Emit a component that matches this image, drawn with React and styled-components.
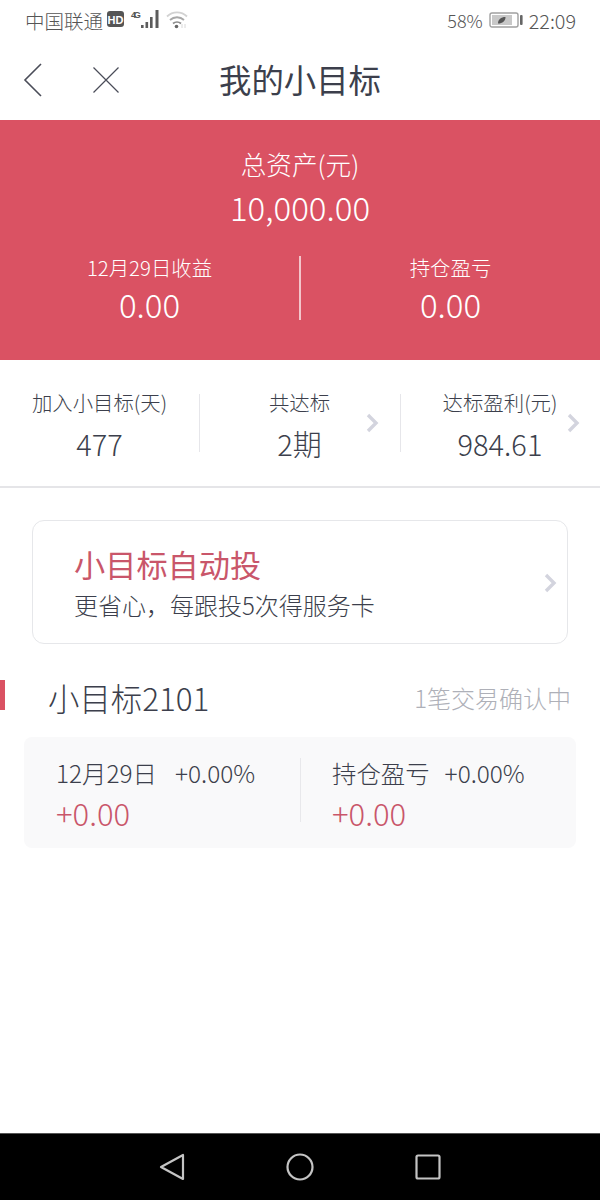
import React from "react";
import styled, { createGlobalStyle } from "styled-components";

const GlobalStyle = createGlobalStyle`
  html, body {
    margin: 0;
    padding: 0;
    background: #fff;
  }
  * {
    box-sizing: border-box;
  }
`;

const FONT = `"Noto Sans CJK SC", "Noto Sans", sans-serif`;

const Page = styled.div`
  width: 600px;
  height: 1200px;
  display: flex;
  flex-direction: column;
  font-family: ${FONT};
  font-weight: 300;
  color: #3c3f4c;
  background: #fff;
  overflow: hidden;
`;

const StatusBar = styled.div`
  height: 40px;
  padding: 0 24px 0 25px;
  display: flex;
  align-items: center;
  justify-content: space-between;
  color: #555;
`;

const StatusGroup = styled.div`
  display: flex;
  align-items: center;
  gap: ${(p) => p.$gap}px;
`;

const StatusText = styled.span`
  font-size: ${(p) => p.$size}px;
`;

const NavBar = styled.div`
  height: 80px;
  padding: 0 22px;
  display: flex;
  align-items: center;
  position: relative;
  gap: 48px;
`;

const NavTitle = styled.div`
  position: absolute;
  left: 0;
  right: 0;
  margin-top: -2px;
  text-align: center;
  font-size: 32.4px;
  line-height: 40px;
  font-weight: 400;
  pointer-events: none;
`;

const Banner = styled.div`
  height: 240px;
  background: #da5263;
  color: #fff;
  display: flex;
  flex-direction: column;
  align-items: center;
  padding-top: 27px;
`;

const BannerLabel = styled.div`
  font-size: 25.6px;
  line-height: 34px;
`;

const BannerTotal = styled.div`
  font-size: 33px;
  line-height: 44px;
  margin-top: 4px;
`;

const BannerRow = styled.div`
  width: 100%;
  margin-top: 27px;
  display: grid;
  grid-template-columns: 299px 1fr;
`;

const BannerCell = styled.div`
  display: flex;
  flex-direction: column;
  align-items: center;
  height: 64px;
  border-left: ${(p) => (p.$divided ? "2px solid #f3c5cb" : "none")};
`;

const BannerSub = styled.div`
  font-size: 20.4px;
  line-height: 26px;
  margin-top: -2px;
`;

const BannerValue = styled.div`
  font-size: 33px;
  line-height: 42px;
  margin-top: 3px;
`;

const Stats = styled.div`
  height: 128px;
  border-bottom: 2px solid #e5e5e8;
  display: grid;
  grid-template-columns: 199px 201px 200px;
  padding-top: 34px;
`;

const StatCell = styled.div`
  height: 58px;
  position: relative;
  border-left: ${(p) => (p.$divided ? "1px solid #e6e6ea" : "none")};
  display: flex;
  flex-direction: column;
  align-items: center;
  padding-right: ${(p) => (p.$divided ? 1 : 0)}px;
`;

const StatLabel = styled.div`
  font-size: 20.4px;
  line-height: 26px;
  margin-top: -5px;
`;

const StatValue = styled.div`
  font-size: 29px;
  line-height: 38px;
  margin-top: 9px;
`;

const Chevron = styled.svg`
  position: absolute;
  right: ${(p) => p.$right}px;
  top: ${(p) => p.$top}px;
`;

const AutoCard = styled.div`
  position: relative;
  margin: 32px 32px 0;
  height: 124px;
  border: 1.5px solid #e6e7ea;
  border-radius: 12px;
  padding: 21px 41px 0;
`;

const AutoTitle = styled.div`
  font-size: 31.2px;
  line-height: 44px;
  color: #c9566a;
  font-weight: 400;
`;

const AutoText = styled.div`
  font-size: 24px;
  line-height: 34px;
  margin-top: 2px;
`;

const SectionHead = styled.div`
  position: relative;
  margin-top: 32px;
  height: 44px;
  padding: 0 29px 0 48px;
  display: flex;
  align-items: center;
  justify-content: space-between;
`;

const SectionMark = styled.span`
  position: absolute;
  left: 0;
  top: 4px;
  width: 5px;
  height: 30px;
  background: #da5263;
`;

const SectionTitle = styled.div`
  font-size: 31.4px;
  line-height: 44px;
`;

const SectionNote = styled.div`
  font-size: 24px;
  line-height: 32px;
  color: #aeb0b8;
`;

const HoldCard = styled.div`
  margin: 17px 24px 0;
  height: 111px;
  background: #f9f9fa;
  border-radius: 8px;
  display: grid;
  grid-template-columns: 276px 1fr;
  padding-top: 21px;
`;

const HoldCell = styled.div`
  height: 64px;
  padding-left: ${(p) => (p.$divided ? 31 : 32)}px;
  border-left: ${(p) => (p.$divided ? "1px solid #e8e8eb" : "none")};
`;

const HoldTop = styled.div`
  display: flex;
  gap: ${(p) => p.$gap}px;
  font-size: 24.4px;
  line-height: 34px;
  margin-top: -2px;
`;

const HoldValue = styled.div`
  font-size: 31px;
  line-height: 42px;
  margin-top: 2px;
  color: #c9566a;
`;

const Spacer = styled.div`
  flex: 1;
`;

const BottomBar = styled.div`
  height: 67px;
  background: #000;
  border-top: 1px solid #555;
  display: grid;
  grid-template-columns: repeat(3, 128px);
  justify-content: center;
  justify-items: center;
  align-items: center;
`;

const ChevronIcon = ({ right, top }) => (
  <Chevron $right={right} $top={top} width="14" height="20" viewBox="0 0 14 20" fill="none">
    <path d="M3 2l8 8-8 8" stroke="#d3d4de" strokeWidth="3.4" />
  </Chevron>
);

const SignalIcons = () => (
  <svg width="84" height="26" viewBox="0 0 84 26" fill="none">
    <rect x="2" y="4" width="17" height="16" rx="3" fill="#555" />
    <text x="10.5" y="16.500" fontSize="11" fontWeight="700" textAnchor="middle" fill="#fff" fontFamily="Liberation Sans, sans-serif">HD</text>
    <text x="26" y="11" fontSize="9.500" fontWeight="700" fill="#555" fontFamily="Liberation Sans, sans-serif" textLength="10">4G</text>
    <g fill="#5c5c5c">
      <rect x="36" y="18" width="2.600" height="3" />
      <rect x="40.500" y="15" width="2.600" height="6" />
      <rect x="45" y="10" width="2.600" height="11" />
      <rect x="50.500" y="3" width="3" height="18" />
    </g>
    <g fill="none" strokeWidth="1.800">
      <path d="M62 9.500c5.600-5.600 14.400-5.600 20 0" stroke="#d2d2d2" />
      <path d="M65 13c4-3.700 10-3.700 14 0" stroke="#a8a8a8" />
      <path d="M68 16.500c2.300-1.900 5.700-1.900 8 0" stroke="#8c8c8c" />
    </g>
    <circle cx="71.500" cy="19.500" r="1.800" fill="#666" />
    <path d="M77 17v4M80 17v4" stroke="#d8d8d8" strokeWidth="1" />
  </svg>
);

const BatteryIcon = () => (
  <svg width="34" height="18" viewBox="0 0 34 18" fill="none">
    <rect x="1" y="2" width="28" height="14" rx="2" stroke="#a0a0a0" strokeWidth="1.400" />
    <rect x="3" y="4" width="20" height="10" fill="#c8c8c8" />
    <rect x="31" y="4" width="2.600" height="10" rx="1" fill="#666" />
    <path d="M9 12.500c0-4 3-6.500 7.500-6.500 0 4-3 6.500-7.500 6.500z" fill="#555" />
  </svg>
);

const BackIcon = () => (
  <svg width="22" height="34" viewBox="0 0 22 34" fill="none">
    <path d="M19 1L3 17l16 16" stroke="#4a4c58" strokeWidth="1.600" />
  </svg>
);

const CloseIcon = () => (
  <svg width="28" height="28" viewBox="0 0 28 28" fill="none">
    <path d="M1.500 1.500l25 25M26.500 1.500l-25 25" stroke="#4a4c58" strokeWidth="1.200" />
  </svg>
);

const App = () => (
  <Page>
    <GlobalStyle />
    <StatusBar>
      <StatusGroup $gap={2}>
        <StatusText $size={19.5}>中国联通</StatusText>
        <SignalIcons />
      </StatusGroup>
      <StatusGroup $gap={6}>
        <StatusText $size={18}>58%</StatusText>
        <BatteryIcon />
        <StatusText $size={19.8}>22:09</StatusText>
      </StatusGroup>
    </StatusBar>
    <NavBar>
      <BackIcon />
      <CloseIcon />
      <NavTitle>我的小目标</NavTitle>
    </NavBar>
    <Banner>
      <BannerLabel>总资产(元)</BannerLabel>
      <BannerTotal>10,000.00</BannerTotal>
      <BannerRow>
        <BannerCell>
          <BannerSub>12月29日收益</BannerSub>
          <BannerValue>0.00</BannerValue>
        </BannerCell>
        <BannerCell $divided>
          <BannerSub>持仓盈亏</BannerSub>
          <BannerValue>0.00</BannerValue>
        </BannerCell>
      </BannerRow>
    </Banner>
    <Stats>
      <StatCell>
        <StatLabel>加入小目标(天)</StatLabel>
        <StatValue>477</StatValue>
      </StatCell>
      <StatCell $divided>
        <StatLabel>共达标</StatLabel>
        <StatValue>2期</StatValue>
        <ChevronIcon right={21} top={19} />
      </StatCell>
      <StatCell $divided>
        <StatLabel>达标盈利(元)</StatLabel>
        <StatValue>984.61</StatValue>
        <ChevronIcon right={20} top={19} />
      </StatCell>
    </Stats>
    <AutoCard>
      <AutoTitle>小目标自动投</AutoTitle>
      <AutoText>更省心，每跟投5次得服务卡</AutoText>
      <ChevronIcon right={10} top={52} />
    </AutoCard>
    <SectionHead>
      <SectionMark />
      <SectionTitle>小目标2101</SectionTitle>
      <SectionNote>1笔交易确认中</SectionNote>
    </SectionHead>
    <HoldCard>
      <HoldCell>
        <HoldTop $gap={18}>
          <span>12月29日</span>
          <span>+0.00%</span>
        </HoldTop>
        <HoldValue>+0.00</HoldValue>
      </HoldCell>
      <HoldCell $divided>
        <HoldTop $gap={15}>
          <span>持仓盈亏</span>
          <span>+0.00%</span>
        </HoldTop>
        <HoldValue>+0.00</HoldValue>
      </HoldCell>
    </HoldCard>
    <Spacer />
    <BottomBar>
      <svg width="26" height="28" viewBox="0 0 26 28" fill="none">
        <path d="M24 2v24L2 14z" stroke="#c4c4c4" strokeWidth="2.200" strokeLinejoin="round" />
      </svg>
      <svg width="28" height="28" viewBox="0 0 28 28" fill="none">
        <circle cx="14" cy="14" r="12.500" stroke="#c4c4c4" strokeWidth="2.200" />
      </svg>
      <svg width="26" height="26" viewBox="0 0 26 26" fill="none">
        <rect x="1.500" y="1.500" width="23" height="23" rx="1.500" stroke="#c4c4c4" strokeWidth="2.200" />
      </svg>
    </BottomBar>
  </Page>
);

export default App;
